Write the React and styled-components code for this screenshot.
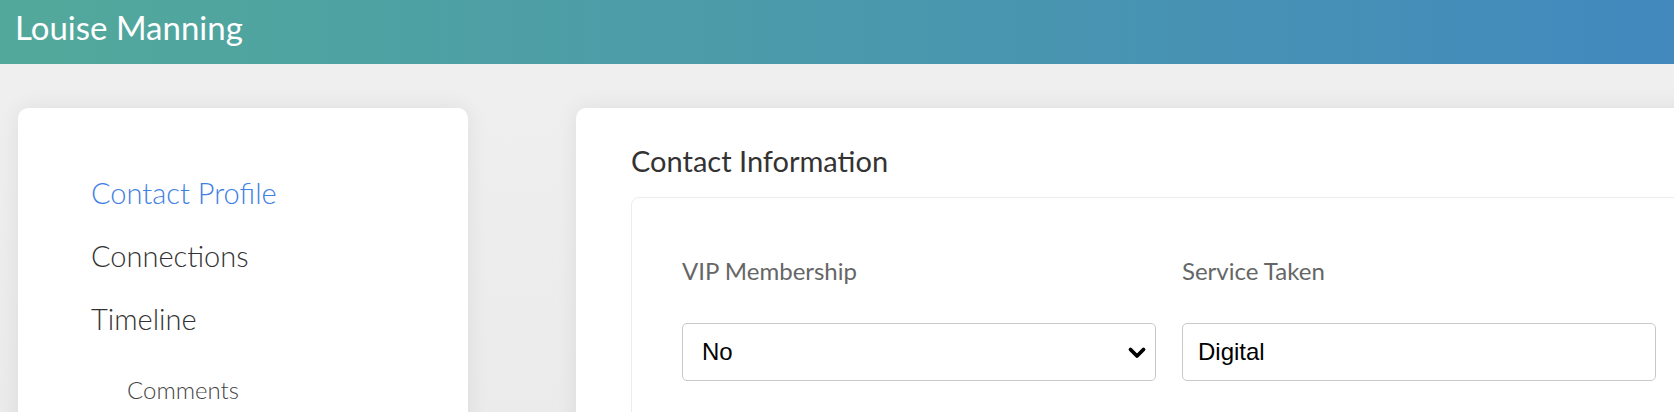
import React from 'react'
import styled, { createGlobalStyle } from 'styled-components'

const GlobalStyle = createGlobalStyle`
  html, body {
    margin: 0;
    padding: 0;
    background: #efefef;
    font-family: Lato, 'Open Sans', sans-serif;
    overflow: hidden;
  }
  * {
    box-sizing: border-box;
  }
`

const Page = styled.div`
  width: 1674px;
  height: 412px;
  overflow: hidden;
  background: linear-gradient(180deg, #f0f0f0 0%, #ebebeb 100%);
`

const Header = styled.header`
  height: 64px;
  padding: 0 15px;
  background: linear-gradient(90deg, #52a99a 0%, #4289be 100%);
  color: #fff;
  font-size: 33px;
  line-height: 54px;
  font-weight: 400;
`

const Main = styled.main`
  display: flex;
  align-items: flex-start;
  gap: 108px;
  padding: 44px 0 0 18px;
`

const Card = styled.section`
  flex: none;
  background: #fff;
  border-radius: 10px;
  box-shadow: 0 0 22px rgba(0, 0, 0, 0.07);
  min-height: 420px;
`

const SideCard = styled(Card)`
  width: 450px;
  padding: 53px 0 0 73px;
`

const ContentCard = styled(Card)`
  width: 1400px;
  padding: 36px 0 0 55px;
`

const NavList = styled.nav`
  display: flex;
  flex-direction: column;
`

const NavItem = styled.a`
  display: block;
  font-size: 29px;
  font-weight: 300;
  line-height: 63px;
  color: ${props => (props.active ? '#3f80e3' : '#333')};
  text-decoration: none;
  cursor: pointer;
`

const SubNavItem = styled.a`
  display: block;
  margin-top: 16px;
  padding-left: 36px;
  font-size: 24px;
  font-weight: 300;
  line-height: 48px;
  color: #444;
  text-decoration: none;
`

const Title = styled.h2`
  margin: 0 0 18px;
  font-size: 29px;
  font-weight: 400;
  line-height: 1.2;
  color: #333;
`

const Panel = styled.div`
  border: 1px solid #ececec;
  border-radius: 8px;
  min-height: 300px;
  padding: 59px 0 0 50px;
`

const FieldGrid = styled.div`
  display: grid;
  grid-template-columns: 474px 474px;
  column-gap: 26px;
`

const Field = styled.div`
  display: flex;
  flex-direction: column;
`

const Label = styled.label`
  font-size: 24px;
  line-height: 1.2;
  color: #666;
  margin-bottom: 37px;
`

const SelectWrap = styled.div`
  position: relative;
`

const controlStyles = `
  display: block;
  width: 100%;
  height: 58px;
  border: 1px solid #c9c9c9;
  border-radius: 5px;
  background: #fff;
  font-family: 'Liberation Sans', Arial, sans-serif;
  font-size: 24px;
  color: #000;
  outline: none;
`

const Select = styled.select`
  ${controlStyles}
  appearance: none;
  padding: 0 50px 0 19px;
`

const Chevron = styled.svg`
  position: absolute;
  right: 9px;
  top: 23px;
  pointer-events: none;
`

const Input = styled.input`
  ${controlStyles}
  padding: 0 15px;
`

const App = () => (
  <>
    <GlobalStyle />
    <Page>
      <Header>Louise Manning</Header>
      <Main>
        <SideCard>
          <NavList>
            <NavItem active>Contact Profile</NavItem>
            <NavItem>Connections</NavItem>
            <NavItem>Timeline</NavItem>
            <SubNavItem>Comments</SubNavItem>
          </NavList>
        </SideCard>
        <ContentCard>
          <Title>Contact Information</Title>
          <Panel>
            <FieldGrid>
              <Field>
                <Label>VIP Membership</Label>
                <SelectWrap>
                  <Select defaultValue="No">
                    <option>No</option>
                    <option>Yes</option>
                  </Select>
                  <Chevron width="20" height="14" viewBox="0 0 20 14">
                    <polyline
                      points="3.5,3.5 10,10 16.5,3.5"
                      fill="none"
                      stroke="#000"
                      strokeWidth="3.8"
                      strokeLinecap="round"
                      strokeLinejoin="round"
                    />
                  </Chevron>
                </SelectWrap>
              </Field>
              <Field>
                <Label>Service Taken</Label>
                <Input type="text" defaultValue="Digital" />
              </Field>
            </FieldGrid>
          </Panel>
        </ContentCard>
      </Main>
    </Page>
  </>
)

export default App
